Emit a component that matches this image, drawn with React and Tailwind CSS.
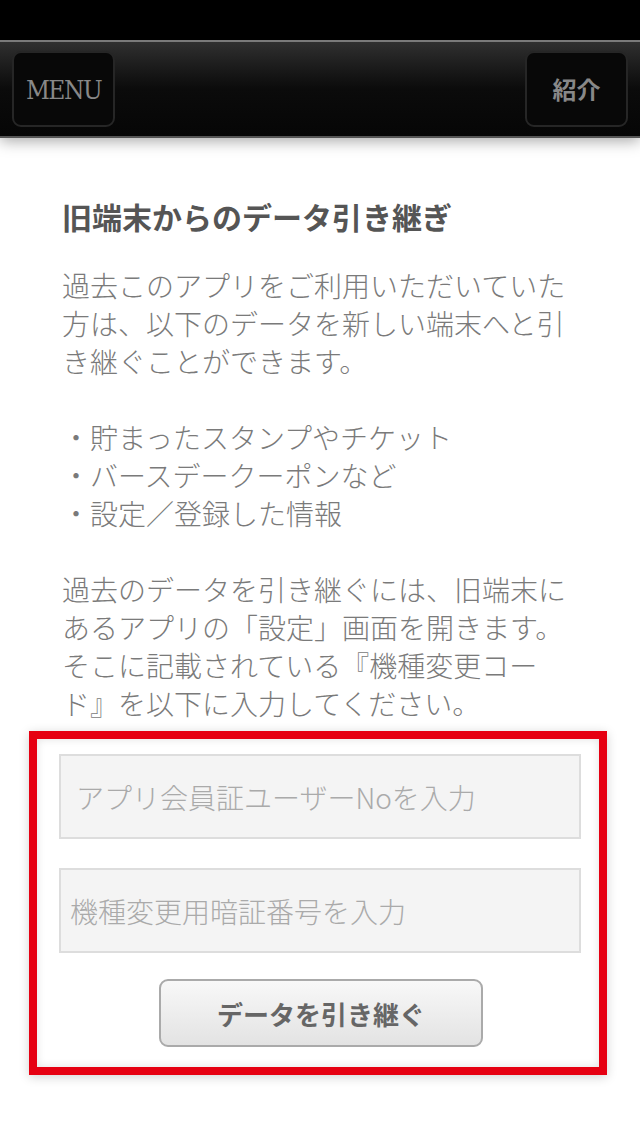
import React from 'react'

const jp = { fontFamily: '"Noto Sans CJK JP", "Noto Sans", sans-serif' }

function NavButton({ children, serif }) {
  return (
    <button
      className={`flex h-[76px] w-[103px] items-center justify-center rounded-[9px] border-2 border-[#262626] bg-[#080808] text-[#888] ${serif ? 'pt-[3px] text-[26px] tracking-[-1.5px]' : 'text-[24px] font-bold'}`}
      style={serif ? { fontFamily: '"DejaVu Serif Condensed", "Liberation Serif", serif' } : jp}
    >
      {children}
    </button>
  )
}

export default function App() {
  return (
    <div className="min-h-[1136px] bg-white" style={jp}>
      <div className="h-10 bg-black" />
      <header className="relative border-t-2 border-b-2 border-t-[#7a7a7a] border-b-[#555] bg-gradient-to-b from-[#303030] via-[#0b0b0b] to-[#060606] shadow-[0_3px_14px_rgba(0,0,0,0.35)]">
        <div className="flex h-[94px] items-center justify-between px-3">
          <NavButton serif>MENU</NavButton>
          <NavButton>紹介</NavButton>
        </div>
      </header>

      <main className="px-[62px] pt-[58px]">
        <h1 className="text-[30px] font-bold leading-[40px] text-[#555]">旧端末からのデータ引き継ぎ</h1>
        <div className="mt-[30px] text-[28px] font-light leading-[38px] text-[#7a7a7a]">
          <p>過去このアプリをご利用いただいていた方は、以下のデータを新しい端末へと引き継ぐことができます。</p>
          <p className="mt-[38px]">・貯まったスタンプやチケット</p>
          <p>・バースデークーポンなど</p>
          <p>・設定／登録した情報</p>
          <p className="mt-[38px]">過去のデータを引き継ぐには、旧端末にあるアプリの「設定」画面を開きます。そこに記載されている『機種変更コード』を以下に入力してください。</p>
        </div>
      </main>

      <section className="ml-[29px] mt-[9px] w-[578px] border-[8px] border-[#e60012] bg-white pb-[20px] pl-[22px] pr-[18px] pt-[15px] shadow-[0_2px_10px_rgba(0,0,0,0.18),inset_0_0_8px_rgba(0,0,0,0.12)]">
        <input
          className="block h-[85px] w-full border-2 border-[#ddd] bg-[#f4f4f4] pl-[15px] text-[28px] font-light text-[#555] outline-none placeholder:text-[#aaa]"
          placeholder="アプリ会員証ユーザーNoを入力"
          style={jp}
        />
        <input
          className="mt-[29px] block h-[85px] w-full border-2 border-[#ddd] bg-[#f4f4f4] pl-[9px] text-[28px] font-light text-[#555] outline-none placeholder:text-[#aaa]"
          placeholder="機種変更用暗証番号を入力"
          style={jp}
        />
        <div className="mt-[26px] flex justify-center pl-[2px]">
          <button
            className="h-[68px] w-[324px] rounded-[9px] border-2 border-[#aaa] bg-gradient-to-b from-[#f8f8f8] to-[#e3e3e3] text-[26px] font-bold text-[#666]"
            style={jp}
          >
            データを引き継ぐ
          </button>
        </div>
      </section>
    </div>
  )
}
